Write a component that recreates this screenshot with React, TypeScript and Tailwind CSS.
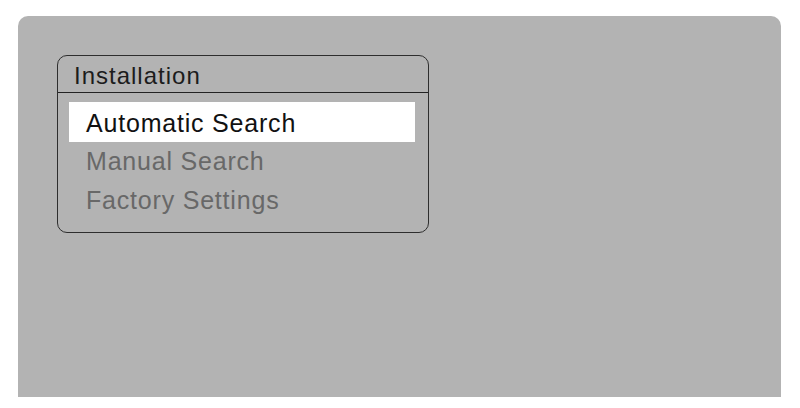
export default function App() {
  const items = ['Automatic Search', 'Manual Search', 'Factory Settings'];

  return (
    <div className="w-[800px] h-[408px] bg-white pt-4 pl-[18px] font-['Liberation_Sans',Arial,sans-serif]">
      <div className="w-[763px] h-[381px] bg-[#b3b3b3] rounded-t-[10px] pt-[39px] pl-[39px]">
        {/* Menu box */}
        <div className="w-[372px] h-[178px] border-[1.5px] border-[#2e2e2e] rounded-[10px]">
          <div className="h-[37px] border-b-[1.5px] border-[#222] pl-[16px] pt-[6px] text-[24px] leading-[27px] text-[#1c1c1c] tracking-[1px]">
            Installation
          </div>
          <ul className="pt-[9px] pl-[11px] pr-[13px]">
            {items.map((item, i) => (
              <li
                key={item}
                className={`pl-[17px] text-[25px] tracking-[0.8px] ${
                  i === 0 ? 'h-[40px] leading-[42px] bg-white text-[#111]' : 'h-[39px] leading-[39px] text-[#686868]'
                }`}
              >
                {item}
              </li>
            ))}
          </ul>
        </div>
      </div>
    </div>
  );
}
